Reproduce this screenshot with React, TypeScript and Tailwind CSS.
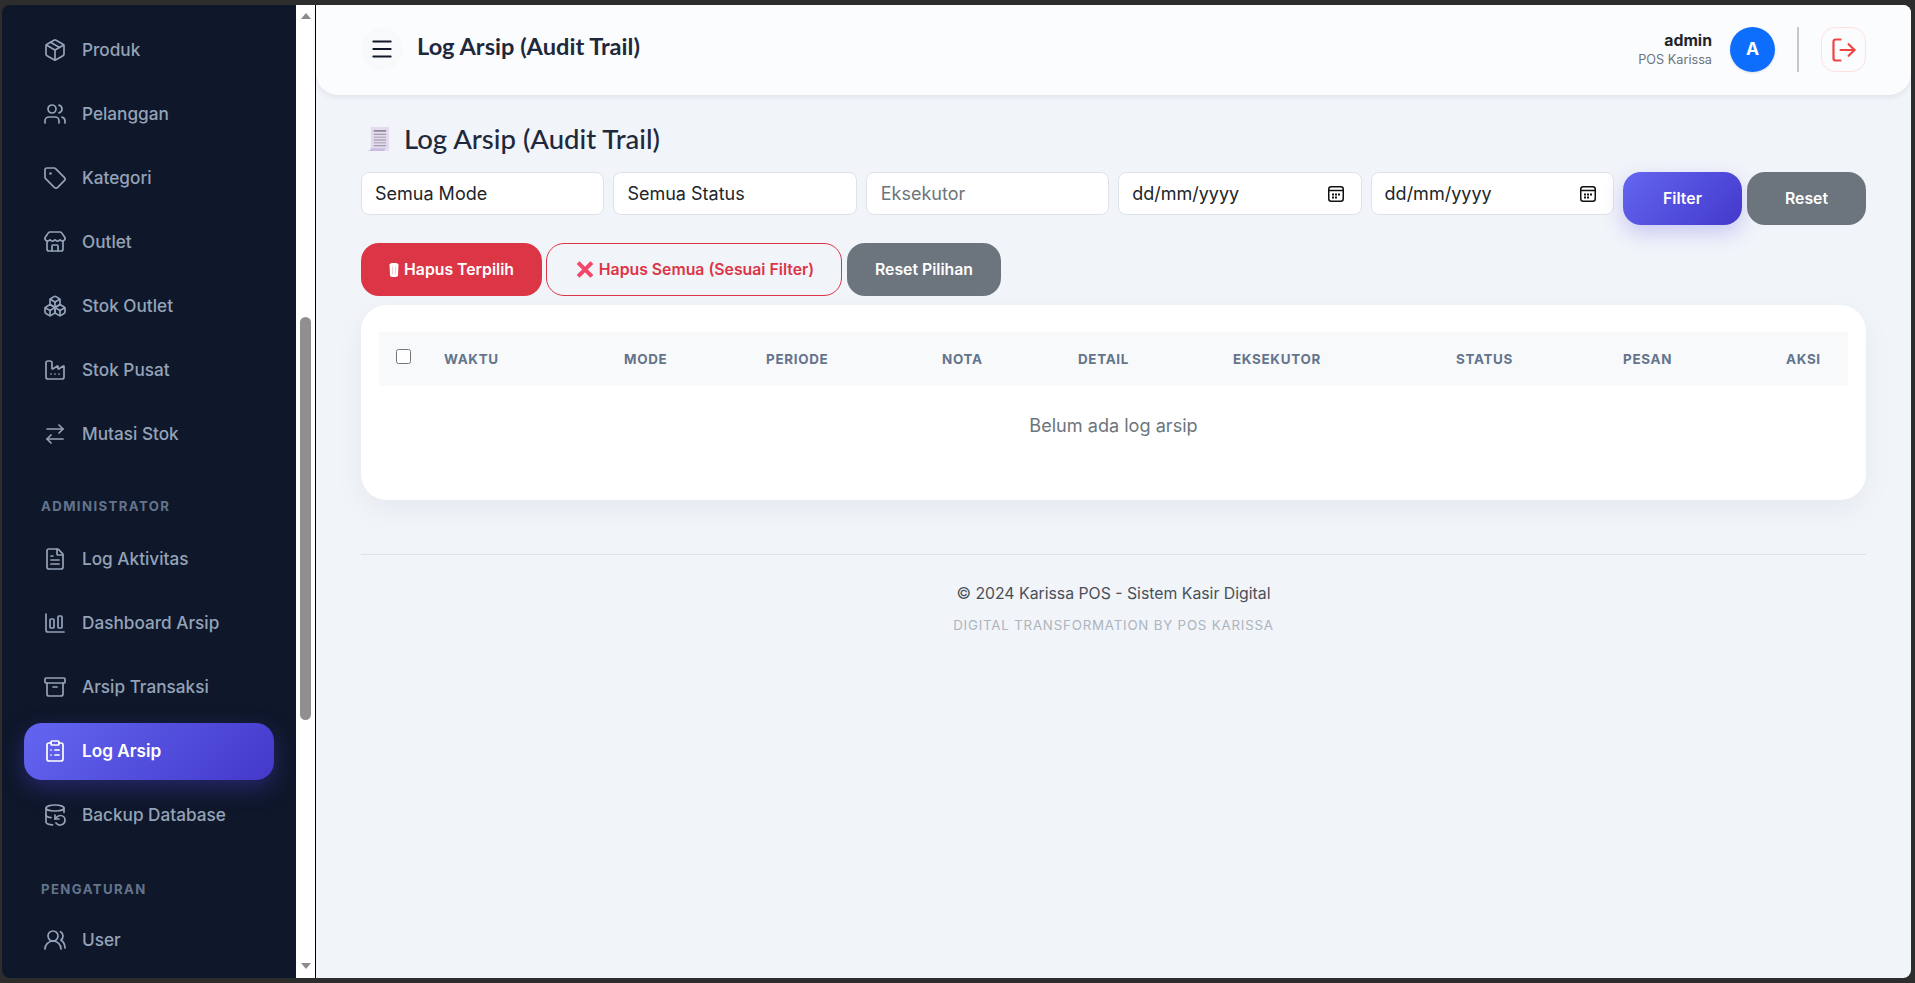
import {
  Package,
  Users,
  Tag,
  Store,
  Boxes,
  Factory,
  ArrowRightLeft,
  FileText,
  ChartColumnBig,
  Archive,
  ClipboardList,
  DatabaseBackup,
  UsersRound,
  LogOut,
  Menu,
} from "lucide-react";
import type { ComponentType } from "react";

type NavItem = { label: string; icon: ComponentType<{ className?: string; strokeWidth?: number }>; active?: boolean };

const stockNav: NavItem[] = [
  { label: "Produk", icon: Package },
  { label: "Pelanggan", icon: Users },
  { label: "Kategori", icon: Tag },
  { label: "Outlet", icon: Store },
  { label: "Stok Outlet", icon: Boxes },
  { label: "Stok Pusat", icon: Factory },
  { label: "Mutasi Stok", icon: ArrowRightLeft },
];

const adminNav: NavItem[] = [
  { label: "Log Aktivitas", icon: FileText },
  { label: "Dashboard Arsip", icon: ChartColumnBig },
  { label: "Arsip Transaksi", icon: Archive },
  { label: "Log Arsip", icon: ClipboardList, active: true },
  { label: "Backup Database", icon: DatabaseBackup },
];

const columns = [
  { label: "Waktu", width: "w-[180px]" },
  { label: "Mode", width: "w-[142px]" },
  { label: "Periode", width: "w-[176px]" },
  { label: "Nota", width: "w-[136px]" },
  { label: "Detail", width: "w-[155px]" },
  { label: "Eksekutor", width: "w-[223px]" },
  { label: "Status", width: "w-[167px]" },
  { label: "Pesan", width: "w-[163px]" },
  { label: "Aksi", width: "w-[79px]" },
];

const NavLink = ({ item }: { item: NavItem }) => {
  const Icon = item.icon;
  return (
    <a
      href="#"
      className={
        item.active
          ? "mx-[22px] flex h-[57px] items-center gap-[15px] rounded-[18px] bg-[linear-gradient(135deg,#6366f1,#4338ca)] pl-[19px] text-[17.2px] font-semibold text-white shadow-[0_8px_22px_rgba(79,70,229,0.35)]"
          : "mx-[22px] flex h-[57px] items-center gap-[15px] rounded-[18px] pl-[19px] text-[17.2px] font-medium text-[#94a3b8]"
      }
    >
      <Icon className="h-[24px] w-[24px] shrink-0" strokeWidth={1.7} />
      <span>{item.label}</span>
    </a>
  );
};

const CalendarGlyph = () => (
  <svg viewBox="0 0 16 16" className="h-[16px] w-[16px] shrink-0" fill="none">
    <rect x="0.75" y="0.75" width="14.5" height="14.5" rx="2.5" stroke="#111" strokeWidth="1.5" />
    <path d="M1 4.5h14" stroke="#111" strokeWidth="1.5" />
    <path d="M4 7.5h2v2H4zM7 7.5h2v2H7zM10 7.5h2v2h-2zM4 10.5h2v2H4zM7 10.5h2v2H7z" fill="#111" />
  </svg>
);

const ReceiptGlyph = () => (
  <svg viewBox="0 0 24 28" className="h-[27px] w-[23px] shrink-0">
    <path d="M4 1h19v22c0 2-1 3-2 3H1c1-1 3-1 3-3z" fill="#e4dcee" />
    <path d="M1 26c1.500-.5 3-1.500 3-3h15c0 1.500-1 3-2 3z" fill="#c9bcdc" />
    <path d="M7 4h13v1.800H7zM7 8h13v1H7zM7 11h13v1H7zM7 14h13v1H7zM7 17h13v1H7zM7 20h13v1H7z" fill="#8f8a9c" />
  </svg>
);

const TrashGlyph = () => (
  <svg viewBox="0 0 10 14" className="h-[14px] w-[10px] shrink-0">
    <path d="M0.500 1.500C0.500 0.600 2 0 5 0s4.500 0.600 4.500 1.500L9 12.500C9 13.500 7 14 5 14s-4-0.500-4-1.500z" fill="#fff" />
    <path d="M3.500 3.500v8M6.500 3.500v8" stroke="#f3c3ca" strokeWidth="0.8" />
  </svg>
);

const CrossGlyph = () => (
  <svg viewBox="0 0 16 16" className="h-[17px] w-[18px] shrink-0">
    <path d="M1.500 1.500l13 13M14.500 1.500l-13 13" stroke="#f0476a" strokeWidth="3.800" strokeLinecap="butt" />
  </svg>
);

const ScrollTrack = () => (
  <div className="flex w-[20px] shrink-0 flex-col items-center border-r border-black bg-white">
    <div className="mt-[8px] h-0 w-0 border-x-[5px] border-b-[6px] border-x-transparent border-b-[#8b8b8b]" />
    <div className="mt-[298px] h-[403px] w-[11px] rounded-[6px] bg-[#8f8f8f]" />
    <div className="mt-[243px] h-0 w-0 border-x-[5px] border-t-[6px] border-x-transparent border-t-[#8b8b8b]" />
  </div>
);

export default function App() {
  return (
    <div className="h-[983px] overflow-hidden bg-[#2d2d2d] pb-[5px] pl-[2px] pr-[4px] pt-[5px] font-['Inter',sans-serif]">
      <div className="flex h-full overflow-hidden rounded-[8px]">
        {/* Sidebar */}
        <aside className="h-full w-[294px] shrink-0 overflow-hidden bg-[#0f172a] pt-[16px]">
          <nav className="flex flex-col gap-[7px]">
            {stockNav.map((item) => (
              <NavLink key={item.label} item={item} />
            ))}
          </nav>
          <p className="mb-[14px] ml-[39px] mt-[35px] text-[13.2px] font-bold tracking-[1.4px] text-[#64748b]">ADMINISTRATOR</p>
          <nav className="flex flex-col gap-[7px]">
            {adminNav.map((item) => (
              <NavLink key={item.label} item={item} />
            ))}
          </nav>
          <p className="mb-[12px] ml-[39px] mt-[36px] text-[13.2px] font-bold tracking-[1.4px] text-[#64748b]">PENGATURAN</p>
          <NavLink item={{ label: "User", icon: UsersRound }} />
        </aside>
        <ScrollTrack />

        {/* Main */}
        <main className="flex min-w-0 flex-1 flex-col bg-[#f1f4f9]">
          <header className="flex h-[90px] shrink-0 items-start justify-between rounded-b-[22px] bg-[#fbfcfe] pl-[45px] pr-[45px] pt-[23px] shadow-[0_2px_6px_rgba(15,23,42,0.08)]">
            <div className="flex items-center gap-[14px]">
              <button className="flex h-[42px] w-[42px] items-center justify-center rounded-full bg-[#f8f9fb] text-[#111827]">
                <Menu className="h-[26px] w-[26px]" strokeWidth={1.8} />
              </button>
              <h1 className="mb-[5px] font-['Lato',sans-serif] text-[23.6px] font-bold text-[#1e293b]">Log Arsip (Audit Trail)</h1>
            </div>
            <div className="-mt-[1px] flex items-center">
              <div className="mr-[18px] text-right">
                <p className="text-[15.8px] font-bold leading-[20px] text-[#212529]">admin</p>
                <p className="text-[12.7px] leading-[18px] text-[#6c757d]">POS Karissa</p>
              </div>
              <div className="flex h-[45px] w-[45px] items-center justify-center rounded-full bg-[#0d6efd] text-[17.6px] font-bold text-white shadow-sm">A</div>
              <div className="ml-[22px] mr-[22px] h-[45px] w-[2px] bg-[#c4c8cd]" />
              <button className="flex h-[45px] w-[45px] items-center justify-center rounded-[14px] border border-[#fee2e2] text-[#ef4444]">
                <LogOut className="h-[28px] w-[28px]" strokeWidth={1.9} />
              </button>
            </div>
          </header>

          <section className="flex-1 pl-[45px] pr-[45px] pt-[26px]">
            <h2 className="mb-[15px] flex h-[36px] items-center gap-[14px] pl-[6px] font-['Lato',sans-serif] text-[27.5px] font-medium text-[#1e293b]">
              <ReceiptGlyph />
              Log Arsip (Audit Trail)
            </h2>

            {/* Filters */}
            <div className="flex items-start gap-[9px]">
              <div className="grid flex-1 grid-cols-5 gap-[9px]">
                <select className="h-[43px] appearance-none rounded-[8px] border border-[#dee2e6] bg-white px-[13px] text-[18px] text-[#212529]">
                  <option>Semua Mode</option>
                </select>
                <select className="h-[43px] appearance-none rounded-[8px] border border-[#dee2e6] bg-white px-[13px] text-[18px] text-[#212529]">
                  <option>Semua Status</option>
                </select>
                <input
                  placeholder="Eksekutor"
                  className="h-[43px] min-w-0 rounded-[8px] border border-[#dee2e6] bg-white px-[14px] text-[18px] placeholder:text-[#6c757d]"
                />
                <div className="flex h-[43px] items-center justify-between rounded-[8px] border border-[#dee2e6] bg-white pl-[13px] pr-[17px] text-[18px] text-[#212529]">
                  dd/mm/yyyy
                  <CalendarGlyph />
                </div>
                <div className="flex h-[43px] items-center justify-between rounded-[8px] border border-[#dee2e6] bg-white pl-[13px] pr-[17px] text-[18px] text-[#212529]">
                  dd/mm/yyyy
                  <CalendarGlyph />
                </div>
              </div>
              <div className="flex gap-[5px]">
                <button className="h-[53px] w-[119px] rounded-[18px] bg-[linear-gradient(135deg,#6366f1,#4338ca)] text-[15.8px] font-semibold text-white shadow-[0_8px_20px_rgba(79,70,229,0.25)]">
                  Filter
                </button>
                <button className="h-[53px] w-[119px] rounded-[18px] bg-[#6c757d] text-[15.8px] font-semibold text-white">Reset</button>
              </div>
            </div>

            {/* Bulk actions */}
            <div className="mt-[18px] flex gap-[4px]">
              <button className="flex h-[53px] w-[181px] items-center justify-center gap-[5px] rounded-[18px] bg-[#dc3545] text-[15.8px] font-semibold text-white">
                <TrashGlyph />
                Hapus Terpilih
              </button>
              <button className="flex h-[53px] w-[296px] items-center justify-center gap-[5px] rounded-[18px] border border-[#dc3545] pl-[2px] text-[15.8px] font-semibold text-[#dc3545]">
                <CrossGlyph />
                Hapus Semua (Sesuai Filter)
              </button>
              <button className="ml-[1px] h-[53px] w-[154px] rounded-[18px] bg-[#6c757d] text-[15.8px] font-semibold text-white">Reset Pilihan</button>
            </div>

            {/* Table */}
            <div className="mt-[9px] h-[195px] rounded-[26px] bg-white px-[18px] pt-[27px] shadow-[0_10px_30px_rgba(15,23,42,0.05)]">
              <table className="w-full table-fixed border-collapse">
                <thead>
                  <tr className="h-[54px] bg-[#f8f9fb]">
                    <th className="w-[48px] pl-[17px] text-left align-middle">
                      <input type="checkbox" className="mb-[6px] block h-[15px] w-[15px]" />
                    </th>
                    {columns.map((col) => (
                      <th key={col.label} className={`${col.width} pl-[17px] pt-[1px] text-left text-[13.4px] font-bold uppercase tracking-[0.7px] text-[#64748b]`}>
                        {col.label}
                      </th>
                    ))}
                  </tr>
                </thead>
                <tbody>
                  <tr>
                    <td colSpan={10} className="pt-[26px] text-center text-[18.1px] leading-[26px] text-[#6c757d]">
                      Belum ada log arsip
                    </td>
                  </tr>
                </tbody>
              </table>
            </div>

            {/* Footer */}
            <footer className="mt-[54px] border-t border-[#dee2e6] pt-[28px] text-center">
              <p className="text-[15.8px] leading-[22px] text-[#495057]">© 2024 Karissa POS - Sistem Kasir Digital</p>
              <p className="mt-[10px] text-[13.3px] leading-[20px] tracking-[0.8px] text-[#adb5bd]">DIGITAL TRANSFORMATION BY POS KARISSA</p>
            </footer>
          </section>
        </main>
      </div>
    </div>
  );
}
